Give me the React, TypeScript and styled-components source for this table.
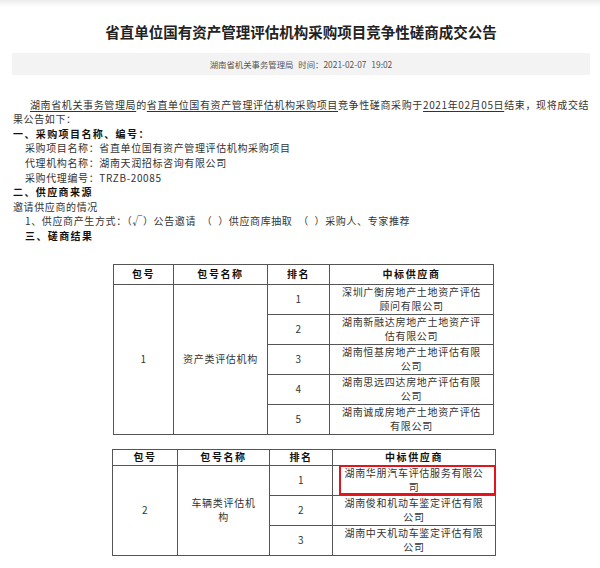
import React from "react";
import styled, { createGlobalStyle } from "styled-components";

const Global = createGlobalStyle`
  html, body { margin: 0; padding: 0; background: #fff; }
  body { font-family: "Noto Sans CJK SC", "Noto Sans", sans-serif; color: #222; }
`;

const Page = styled.div`
  width: 600px;
  min-height: 568px;
  box-sizing: border-box;
  padding: 0 10px 0 12px;
  background: linear-gradient(#ececec, #fff 7px);
`;

const Title = styled.h1`
  margin: 0;
  padding-top: 22px;
  height: 20px;
  line-height: 20px;
  text-align: center;
  font-size: 14.5px;
  font-weight: 700;
  color: #222;
`;

const MetaBar = styled.div`
  margin-top: 11px;
  height: 22px;
  line-height: 22px;
  background: #f3f3f3;
  text-align: center;
  font-size: 8.4px;
  color: #555;
  word-spacing: 3px;
`;

const Body = styled.div`
  margin-top: 22.7px;
  font-size: 10px;
  line-height: 14.6px;
  letter-spacing: 0.62px;
  color: #333;
`;

const Line = styled.div<{ $indent?: number; $bold?: boolean }>`
  white-space: pre;
  padding-left: ${(p) => p.$indent ?? 1}px;
  font-weight: ${(p) => (p.$bold ? 700 : 400)};
  letter-spacing: ${(p) => (p.$bold ? "1.4px" : "0.62px")};
  color: ${(p) => (p.$bold ? "#111" : "#333")};
`;

const U = styled.span`
  text-decoration: underline;
  text-underline-offset: 2px;
`;

const Table = styled.table<{ $left: number; $top: number }>`
  border-collapse: collapse;
  margin-left: ${(p) => p.$left}px;
  margin-top: ${(p) => p.$top}px;
  table-layout: fixed;
  font-size: 10px;
  line-height: 14.5px;
  letter-spacing: 0.7px;
  color: #333;
`;

const HeadCell = styled.th<{ $h: number }>`
  border: 1px solid #555;
  height: ${(p) => p.$h}px;
  padding: 0;
  font-weight: 700;
  letter-spacing: 1.6px;
  color: #111;
  text-align: center;
  vertical-align: middle;
`;

const Cell = styled.td<{ $h?: number; $pad?: number }>`
  position: relative;
  border: 1px solid #555;
  height: ${(p) => p.$h ?? 28}px;
  padding: 0 ${(p) => p.$pad ?? 0}px;
  text-align: center;
  vertical-align: middle;
`;

const Highlight = styled.span`
  position: absolute;
  left: 6px;
  right: -1px;
  top: -1px;
  bottom: 0;
  border: 2px solid #e3141c;
  pointer-events: none;
`;

type Row = { rank: string; supplier: [string, string]; mark?: boolean };

const pack1: Row[] = [
  { rank: "1", supplier: ["深圳广衡房地产土地资产评估", "顾问有限公司"] },
  { rank: "2", supplier: ["湖南新融达房地产土地资产评", "估有限公司"] },
  { rank: "3", supplier: ["湖南恒基房地产土地评估有限", "公司"] },
  { rank: "4", supplier: ["湖南思远四达房地产评估有限", "公司"] },
  { rank: "5", supplier: ["湖南诚成房地产土地资产评估", "有限公司"] },
];

const pack2: Row[] = [
  { rank: "1", supplier: ["湖南华朋汽车评估服务有限公", "司"], mark: true },
  { rank: "2", supplier: ["湖南俊和机动车鉴定评估有限", "公司"] },
  { rank: "3", supplier: ["湖南中天机动车鉴定评估有限", "公司"] },
];

type TableProps = {
  left: number;
  top: number;
  widths: number[];
  headH: number;
  rowH: number;
  pack: string;
  name: React.ReactNode;
  namePad: number;
  rows: Row[];
};

function ResultTable({ left, top, widths, headH, rowH, pack, name, namePad, rows }: TableProps) {
  const total = widths.reduce((a, b) => a + b, 0);
  return (
    <Table $left={left} $top={top} style={{ width: total }}>
      <colgroup>
        {widths.map((w, i) => (
          <col key={i} style={{ width: w }} />
        ))}
      </colgroup>
      <thead>
        <tr>
          <HeadCell $h={headH}>包号</HeadCell>
          <HeadCell $h={headH}>包号名称</HeadCell>
          <HeadCell $h={headH}>排名</HeadCell>
          <HeadCell $h={headH}>中标供应商</HeadCell>
        </tr>
      </thead>
      <tbody>
        {rows.map((r, i) => (
          <tr key={i}>
            {i === 0 && (
              <>
                <Cell rowSpan={rows.length}>{pack}</Cell>
                <Cell rowSpan={rows.length} $pad={namePad}>
                  {name}
                </Cell>
              </>
            )}
            <Cell $h={rowH}>{r.rank}</Cell>
            <Cell $h={rowH}>
              {r.supplier[0]}
              <br />
              {r.supplier[1]}
              {r.mark && <Highlight />}
            </Cell>
          </tr>
        ))}
      </tbody>
    </Table>
  );
}

export default function App() {
  return (
    <>
      <Global />
      <Page>
        <Title>省直单位国有资产管理评估机构采购项目竞争性磋商成交公告</Title>
        <MetaBar>湖南省机关事务管理局 时间：2021-02-07 19:02</MetaBar>
        <Body>
          <Line $indent={18}>
            <U>湖南省机关事务管理局</U>的<U>省直单位国有资产管理评估机构采购项目</U>竞争性磋商采购于
            <U>2021年02月05日</U>结束，现将成交结
          </Line>
          <Line>果公告如下：</Line>
          <Line $bold>一、采购项目名称、编号：</Line>
          <Line $indent={13}>采购项目名称：省直单位国有资产管理评估机构采购项目</Line>
          <Line $indent={13}>代理机构名称：湖南天润招标咨询有限公司</Line>
          <Line $indent={13}>采购代理编号：TRZB-20085</Line>
          <Line $bold>二、供应商来源</Line>
          <Line>邀请供应商的情况</Line>
          <Line $indent={13}>1、供应商产生方式：（√）公告邀请  （  ）供应商库抽取  （  ）采购人、专家推荐</Line>
          <Line $indent={13} $bold>
            三、磋商结果
          </Line>
        </Body>
        <ResultTable
          left={101}
          top={20}
          widths={[60, 94, 62, 164]}
          headH={19}
          rowH={28}
          pack="1"
          name="资产类评估机构"
          namePad={4}
          rows={pack1}
        />
        <ResultTable
          left={100}
          top={14}
          widths={[65, 92, 63, 163]}
          headH={15}
          rowH={28}
          pack="2"
          name={
            <>
              车辆类评估机
              <br />构
            </>
          }
          namePad={4}
          rows={pack2}
        />
      </Page>
    </>
  );
}
